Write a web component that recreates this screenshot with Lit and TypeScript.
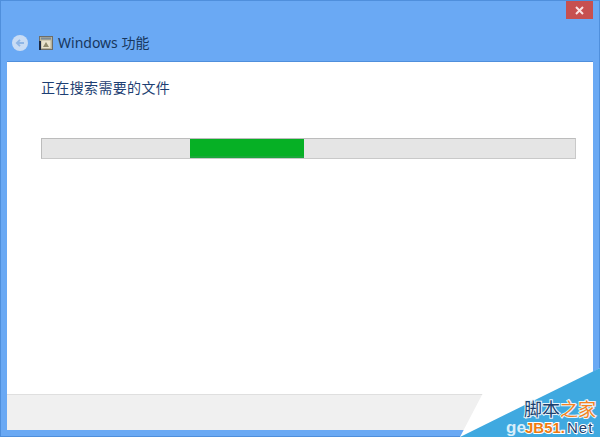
import { LitElement, html, css } from "lit";
import { customElement } from "lit/decorators.js";

@customElement("app-root")
export class AppRoot extends LitElement {
  static styles = css`
    :host { display: block; width: 600px; height: 437px; overflow: hidden; position: relative; font-family: "Noto Sans CJK SC", "Noto Sans", sans-serif; }
    .win { box-sizing: border-box; width: 600px; height: 437px; background: #6aa9f4; border: 1px solid #4f8fdc; display: flex; flex-direction: column; padding: 0 6px 6px; position: relative; }
    .top { height: 60px; flex: none; display: flex; flex-direction: column; }
    .caption { display: flex; justify-content: flex-end; height: 19px; }
    .close { width: 27px; height: 18px; background: #c75050; display: flex; align-items: center; justify-content: center; }
    .titlebar { display: flex; align-items: center; margin-top: 11px; padding-left: 5px; height: 24px; }
    .back { width: 16px; height: 16px; margin-right: 11px; flex: none; }
    .appicon { width: 14px; height: 14px; margin-right: 5px; flex: none; }
    .title { font-size: 14px; color: #17375e; line-height: 20px; font-family: "Noto Sans", "Noto Sans CJK SC", sans-serif; }
    .panel { flex: 1; background: #fff; display: flex; flex-direction: column; border-top: 1px solid #4f8fdc; }
    .content { flex: 1; padding: 15px 17px 0 34px; display: flex; flex-direction: column; }
    .heading { font-size: 14px; letter-spacing: 0.35px; line-height: 20px; color: #1e3f73; height: 20px; }
    .track { margin-top: 41px; height: 19px; background: #e5e5e5; border: 1px solid #bcbcbc; border-bottom-color: #c9c9c9; border-right-color: #c9c9c9; display: flex; padding-left: 148px; }
    .bar { width: 114px; height: 19px; background: linear-gradient(#06b025 0 17px, #1aa83a 17px 19px); }
    .footer { height: 36px; flex: none; box-sizing: border-box; background: #f0f0f0; border-top: 1px solid #dfdfdf; }
    .wm-white { position: absolute; left: 0; top: 0; width: 600px; height: 437px; pointer-events: none; }
    .wm-a { position: absolute; left: 524px; top: 398px; font-size: 18px; line-height: 20px; color: #1b3f6e; white-space: nowrap; -webkit-text-stroke: 2px #e8f5fc; paint-order: stroke fill; }
    .wm-a b { font-weight: 400; color: #f58220; }
    .wm-b { position: absolute; left: 506px; top: 419px; width: 94px; display: flex; align-items: baseline; line-height: 18px; font-weight: 700; white-space: nowrap; font-family: "Liberation Sans", sans-serif; }
    .ge { font-size: 17px; color: #d8eefa; width: 19px; flex: none; }
    .o { font-size: 15px; color: #f07a10; width: 42px; flex: none; -webkit-text-stroke: 2px #fff; paint-order: stroke fill; }
    .n { font-size: 15px; letter-spacing: 1px; color: #1b3f6e; font-weight: 400; -webkit-text-stroke: 2px #fff; paint-order: stroke fill; }
  `;

  render() {
    return html`
      <div class="win">
        <div class="top">
          <div class="caption">
            <div class="close">
              <svg width="9" height="9" viewBox="0 0 9 9"><path d="M1 1L8 8M8 1L1 8" stroke="#fbe3e3" stroke-width="2"/></svg>
            </div>
          </div>
          <div class="titlebar">
            <svg class="back" viewBox="0 0 16 16">
              <circle cx="8" cy="8" r="8" fill="#c9dcf4"/>
              <path d="M12 8H5M8 4.800L4.800 8L8 11.200" fill="none" stroke="#8fb6e6" stroke-width="1.800"/>
            </svg>
            <svg class="appicon" viewBox="0 0 14 14">
              <rect x="0.500" y="0.500" width="13" height="13" fill="#b9b39a" stroke="#6d6d68"/>
              <rect x="2" y="1.500" width="10" height="2" fill="#7d8b96"/>
              <rect x="2.500" y="4.500" width="9" height="7.500" fill="#e8e2cc"/>
              <path d="M4 11L7 6L10 11Z" fill="#8f8a6e"/>
              <rect x="0" y="5" width="2" height="9" fill="#1c2a44"/>
            </svg>
            <span class="title">Windows 功能</span>
          </div>
        </div>
        <div class="panel">
          <div class="content">
            <div class="heading">正在搜索需要的文件</div>
            <div class="track"><div class="bar"></div></div>
          </div>
          <div class="footer"></div>
        </div>
      </div>
      <svg class="wm-white" viewBox="0 0 600 437">
        <polygon points="483,393 593,393 593,437 460,437" fill="#fff"/>
        <polygon points="593,372 600,368 600,437 593,437" fill="#fff"/>
        <polygon points="460,437 600,368 600,437" fill="#3fa9e0"/>
      </svg>
      <div class="wm-a">脚本<b>之家</b></div>
      <div class="wm-b"><span class="ge">ge</span><span class="o">JB51.</span><span class="n">Net</span></div>
    `;
  }
}
